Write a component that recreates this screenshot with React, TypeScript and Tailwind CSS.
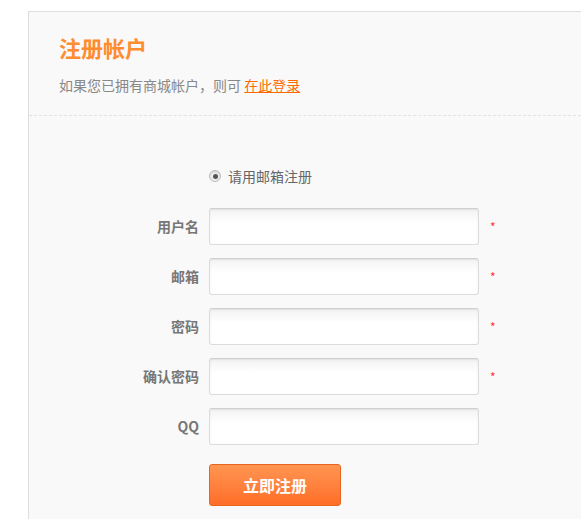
const font = "font-['Microsoft_YaHei','Noto_Sans_CJK_SC',sans-serif]"

const fields = [
  { label: "用户名", required: true },
  { label: "邮箱", required: true },
  { label: "密码", required: true, type: "password" },
  { label: "确认密码", required: true, type: "password" },
  { label: "QQ", required: false },
]

export default function App() {
  return (
    <div className={`min-h-[519px] bg-white pt-[11px] pl-[28px] ${font}`}>
      <div className="min-h-[508px] border-t border-l border-[#dddddd] bg-[#f9f9f9]">
        <div className="px-[30px] pt-[20px] pb-[20px] border-b border-dashed border-[#e2e2e2]">
          <h2 className="text-[22px] leading-[30px] font-bold text-[#ff8c2e]">注册帐户</h2>
          <p className="mt-[13px] text-[14px] leading-[20px] text-[#888888]">
            如果您已拥有商城帐户，则可{" "}
            <a href="#" className="text-[#ff6a00] underline">在此登录</a>
          </p>
        </div>

        <div className="pt-[50px]">
          <div className="flex items-center pl-[180px] h-[20px]">
            <span className="w-[12px] h-[12px] rounded-full border border-[#bbbbbb] bg-[#f0f0f0] flex items-center justify-center shadow-[inset_0_1px_2px_rgba(0,0,0,0.15)]">
              <span className="w-[5px] h-[5px] rounded-full bg-[#555555]" />
            </span>
            <span className="ml-[7px] text-[14px] text-[#666666]">请用邮箱注册</span>
          </div>

          <div className="mt-[22px] flex flex-col gap-[13px]">
            {fields.map((f) => (
              <div key={f.label} className="flex items-center">
                <label className="w-[170px] text-right text-[14px] font-bold text-[#777777]">{f.label}</label>
                <input
                  type={f.type ?? "text"}
                  className="ml-[10px] w-[270px] h-[37px] rounded-[3px] border border-[#dcdcdc] border-t-[#cfcfcf] bg-gradient-to-b from-[#f3f3f3] to-white to-[40%] shadow-[inset_0_1px_2px_rgba(0,0,0,0.08)] outline-none px-2 text-[13px]"
                />
                {f.required && <span className="ml-[11px] text-[12px] text-[#ff3333]">*</span>}
              </div>
            ))}
          </div>

          <div className="mt-[19px] pl-[180px]">
            <button className="w-[132px] h-[42px] rounded-[3px] border border-[#e8651f] bg-gradient-to-b from-[#ff9551] to-[#ff6d27] text-white text-[16px] font-bold">
              立即注册
            </button>
          </div>
        </div>
      </div>
    </div>
  )
}
